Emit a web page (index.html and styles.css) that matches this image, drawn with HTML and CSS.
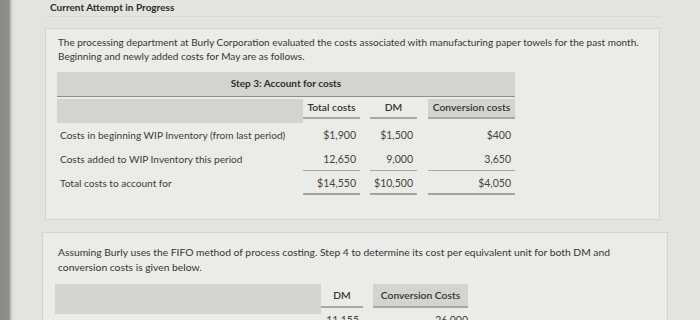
FILE: index.html
```html
<!DOCTYPE html>
<html lang="en">
<head>
<meta charset="utf-8">
<title>Current Attempt in Progress</title>
<link rel="stylesheet" href="styles.css">
</head>
<body>
<div class="frame">
  <div class="bezel"></div>
  <main class="screen">
    <header class="topbar">
      <h1 class="title">Current Attempt in Progress</h1>
    </header>

    <section class="card card-one">
      <p class="lead">The processing department at Burly Corporation evaluated the costs associated with manufacturing paper towels for the past month. Beginning and newly added costs for May are as follows.</p>

      <div class="costs">
        <div class="head-main">Step 3: Account for costs</div>

        <div class="head-label"></div>
        <div class="head-col col-total">Total costs</div>
        <div class="head-col col-dm">DM</div>
        <div class="head-col col-cc shaded">Conversion costs</div>

        <div class="label">Costs in beginning WIP Inventory (from last period)</div>
        <div class="num col-total">$1,900</div>
        <div class="num col-dm">$1,500</div>
        <div class="num col-cc">$400</div>

        <div class="label">Costs added to WIP Inventory this period</div>
        <div class="num col-total rule">12,650</div>
        <div class="num col-dm rule">9,000</div>
        <div class="num col-cc rule">3,650</div>

        <div class="label">Total costs to account for</div>
        <div class="num col-total total">$14,550</div>
        <div class="num col-dm total">$10,500</div>
        <div class="num col-cc total">$4,050</div>
      </div>
    </section>

    <section class="card card-two">
      <p class="lead lead-two">Assuming Burly uses the FIFO method of process costing. Step 4 to determine its cost per equivalent unit for both DM and conversion costs is given below.</p>

      <div class="unit">
        <div class="head-label"></div>
        <div class="head-col u-dm">DM</div>
        <div class="head-col u-cc shaded">Conversion Costs</div>

        <div class="label"></div>
        <div class="num u-dm">11,155</div>
        <div class="num u-cc">26,000</div>
      </div>
    </section>
  </main>
</div>
</body>
</html>
```

FILE: styles.css
```css
* { box-sizing: border-box; }

html, body {
  margin: 0;
  height: 320px;
  overflow: hidden;
}

body {
  background: #e3e3df;
  font-family: Lato, "Open Sans", sans-serif;
  color: #383836;
}

.frame {
  display: flex;
  height: 320px;
}

.bezel {
  width: 13px;
  flex: none;
  background: linear-gradient(to right, #8b8b89 0, #8f8f8d 9px, #c9c9c6 11px, #dcdcd8 13px);
}

.screen {
  flex: 1;
  padding: 0 40px 0 32px;
}

.topbar {
  height: 17px;
  border-bottom: 1px solid #d9d9d5;
  padding-left: 5px;
}

.title {
  margin: 0;
  font-size: 10px;
  line-height: 15px;
  font-weight: 700;
  color: #2c2c2a;
}

.card {
  background: #ebebe7;
  border: 1px solid #d3d3cf;
}

.card-one {
  margin-top: 11px;
  padding: 6px 10px 24px 12px;
}

.card-two {
  margin-top: 12px;
  margin-left: -3px;
  margin-right: -8px;
  padding: 12px 10px 0 15px;
  height: 120px;
}

.lead {
  margin: 0;
  font-size: 10px;
  line-height: 14px;
  color: #363634;
}

.lead-two {
  font-size: 10.3px;
  line-height: 15px;
}

/* Step 3 table */
.costs {
  display: grid;
  grid-template-columns: 246px 57px 57px 98px;
  margin-top: 9px;
  margin-left: -1px;
}

.head-main {
  grid-column: 1 / -1;
  height: 25px;
  background: #d3d3cf;
  border-bottom: 1.5px solid #8e8e8b;
  text-align: center;
  line-height: 23px;
  font-weight: 700;
  font-size: 10px;
  color: #2e2e2c;
}

.head-label {
  margin-top: 2px;
  height: 24px;
  background: #d3d3cf;
}

.head-col {
  margin-top: 2px;
  height: 20px;
  line-height: 17px;
  text-align: center;
  font-weight: 600;
  font-size: 10.3px;
  color: #333331;
  border-bottom: 2px solid #a8a8a4;
  white-space: nowrap;
}

.shaded { background: #d3d3cf; }

.col-dm { margin-left: 10px; }
.col-cc { margin-left: 11px; }

.label {
  height: 24px;
  line-height: 24px;
  padding-left: 3px;
  color: #3c3c3a;
  font-size: 10.1px;
  white-space: nowrap;
}

.num {
  height: 24px;
  line-height: 24px;
  text-align: right;
  padding-right: 4px;
  color: #444442;
  font-size: 10.5px;
}

.rule { border-bottom: 1.5px solid #a9a9a5; }
.total { border-bottom: 2.5px solid #a3a39f; }

/* Step 4 table */
.unit {
  display: grid;
  grid-template-columns: 266px 42px 105px;
  margin-top: 9px;
  margin-left: -3px;
}

.unit .head-label {
  margin-top: 0;
  height: 30px;
}

.unit .head-col {
  margin-top: 0;
  height: 24px;
  line-height: 22px;
}

.u-cc { margin-left: 10px; }
.unit .u-cc { padding-right: 0; }

.unit .num {
  margin-top: -6px;
  line-height: 24px;
}
.unit .label { height: 18px; }
```
